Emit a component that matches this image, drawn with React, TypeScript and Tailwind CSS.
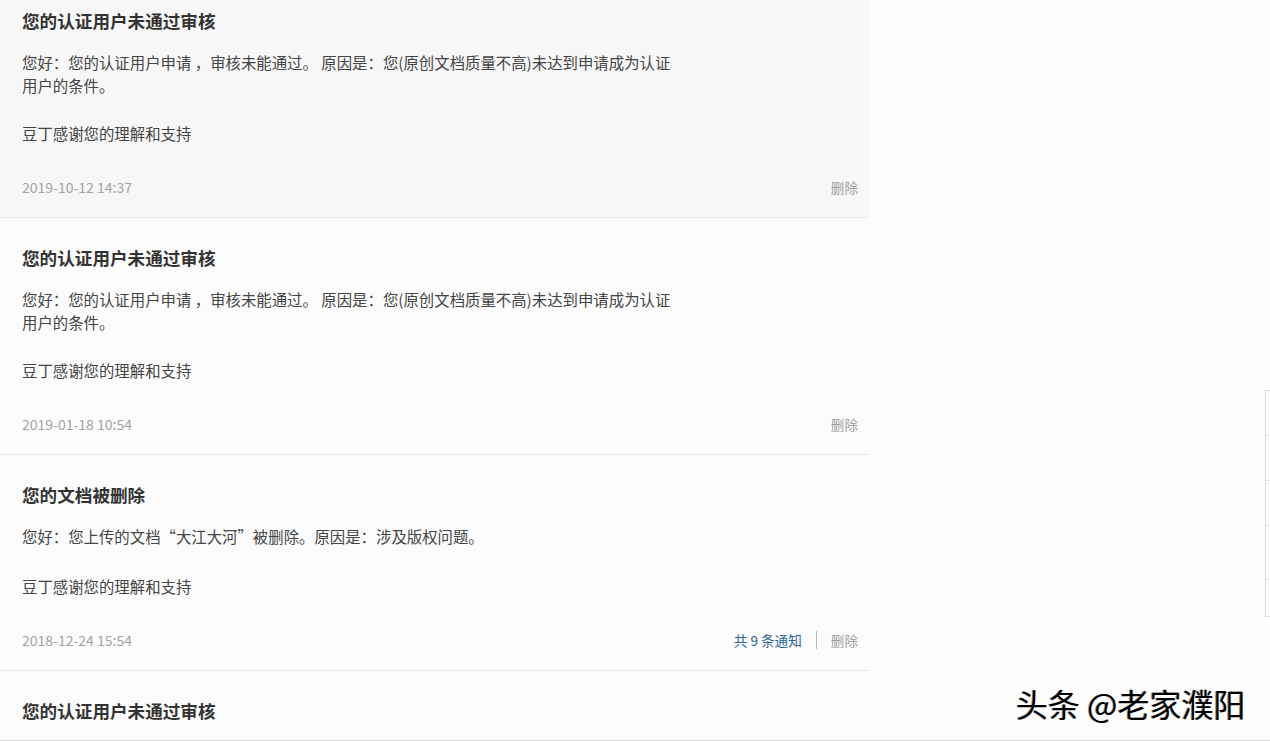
import React from "react";

type Item = {
  title: string;
  lines: string[];
  date: string;
  count?: boolean;
  bg: string;
  titleOnly?: boolean;
};

const items: Item[] = [
  {
    title: "您的认证用户未通过审核",
    lines: [
      "您好：您的认证用户申请 ，审核未能通过。 原因是：您(原创文档质量不高)未达到申请成为认证",
      "用户的条件。",
    ],
    date: "2019-10-12 14:37",
    bg: "bg-[#f7f7f7]",
  },
  {
    title: "您的认证用户未通过审核",
    lines: [
      "您好：您的认证用户申请 ，审核未能通过。 原因是：您(原创文档质量不高)未达到申请成为认证",
      "用户的条件。",
    ],
    date: "2019-01-18 10:54",
    bg: "bg-[#fcfcfc]",
  },
  {
    title: "您的文档被删除",
    lines: ["您好：您上传的文档“大江大河”被删除。原因是：涉及版权问题。"],
    date: "2018-12-24 15:54",
    count: true,
    bg: "bg-[#fcfcfc]",
  },
  {
    title: "您的认证用户未通过审核",
    lines: [],
    date: "",
    bg: "bg-[#fcfcfc]",
    titleOnly: true,
  },
];

function Notice({ item }: { item: Item }) {
  const single = item.lines.length === 1;
  if (item.titleOnly) {
    return (
      <div className={`${item.bg} pl-[22px] pr-[11px] pt-[28px] pb-[40px]`}>
        <div className="text-[17.6px] leading-[24px] font-bold text-[#333]">{item.title}</div>
      </div>
    );
  }
  return (
    <div className={`${item.bg} border-b border-[#e8e8e8] pl-[22px] pr-[11px] pt-[28px] pb-[19px]`}>
      <div className="text-[17.6px] leading-[24px] font-bold text-[#333]">{item.title}</div>
      <div className="mt-[18px] text-[15.4px] leading-[23px] text-[#444] whitespace-nowrap">
        {item.lines.map((l, i) => (
          <div key={i}>{l}</div>
        ))}
      </div>
      <div
        className={`${single ? "mt-[27px]" : "mt-[25px]"} text-[15.4px] leading-[23px] text-[#444]`}
      >
        豆丁感谢您的理解和支持
      </div>
      <div className="mt-[31px] flex items-center justify-between leading-[22px]">
        <span className="text-[14px] text-[#a3a3a3]">{item.date}</span>
        <div className="flex items-center text-[13.6px]">
          {item.count && (
            <>
              <span className="text-[#2a6592]">共 9 条通知</span>
              <span className="mx-[14px] h-[18px] w-px bg-[#bbb]" />
            </>
          )}
          <span className="text-[#a0a0a0]">删除</span>
        </div>
      </div>
    </div>
  );
}

export default function App() {
  return (
    <div
      className="relative flex h-[741px] w-full overflow-hidden border-b border-[#d6d6d6] bg-[#fdfdfd]"
      style={{ fontFamily: '"Noto Sans CJK SC", "Noto Sans", sans-serif' }}
    >
      <div className="-mt-[19px] w-[869px] shrink-0">
        {items.map((it, i) => (
          <Notice key={i} item={it} />
        ))}
      </div>
      <div className="flex flex-1 justify-end pt-[390px]">
        <div className="flex h-[227px] w-[5px] flex-col border-l border-t border-b border-[#dcdcdc]">
          <div className="h-[45px] border-b border-[#e2e2e2]" />
          <div className="h-[45px] border-b border-[#e2e2e2]" />
          <div className="h-[45px] border-b border-[#e2e2e2]" />
          <div className="h-[54px] border-b border-[#e2e2e2]" />
        </div>
      </div>
      <div className="absolute left-[1016px] top-[681px] text-[32px] leading-[44px] text-black [text-shadow:1px_1px_0_#fff,-1px_0_0_#888]">
        头条 @老家濮阳
      </div>
    </div>
  );
}
